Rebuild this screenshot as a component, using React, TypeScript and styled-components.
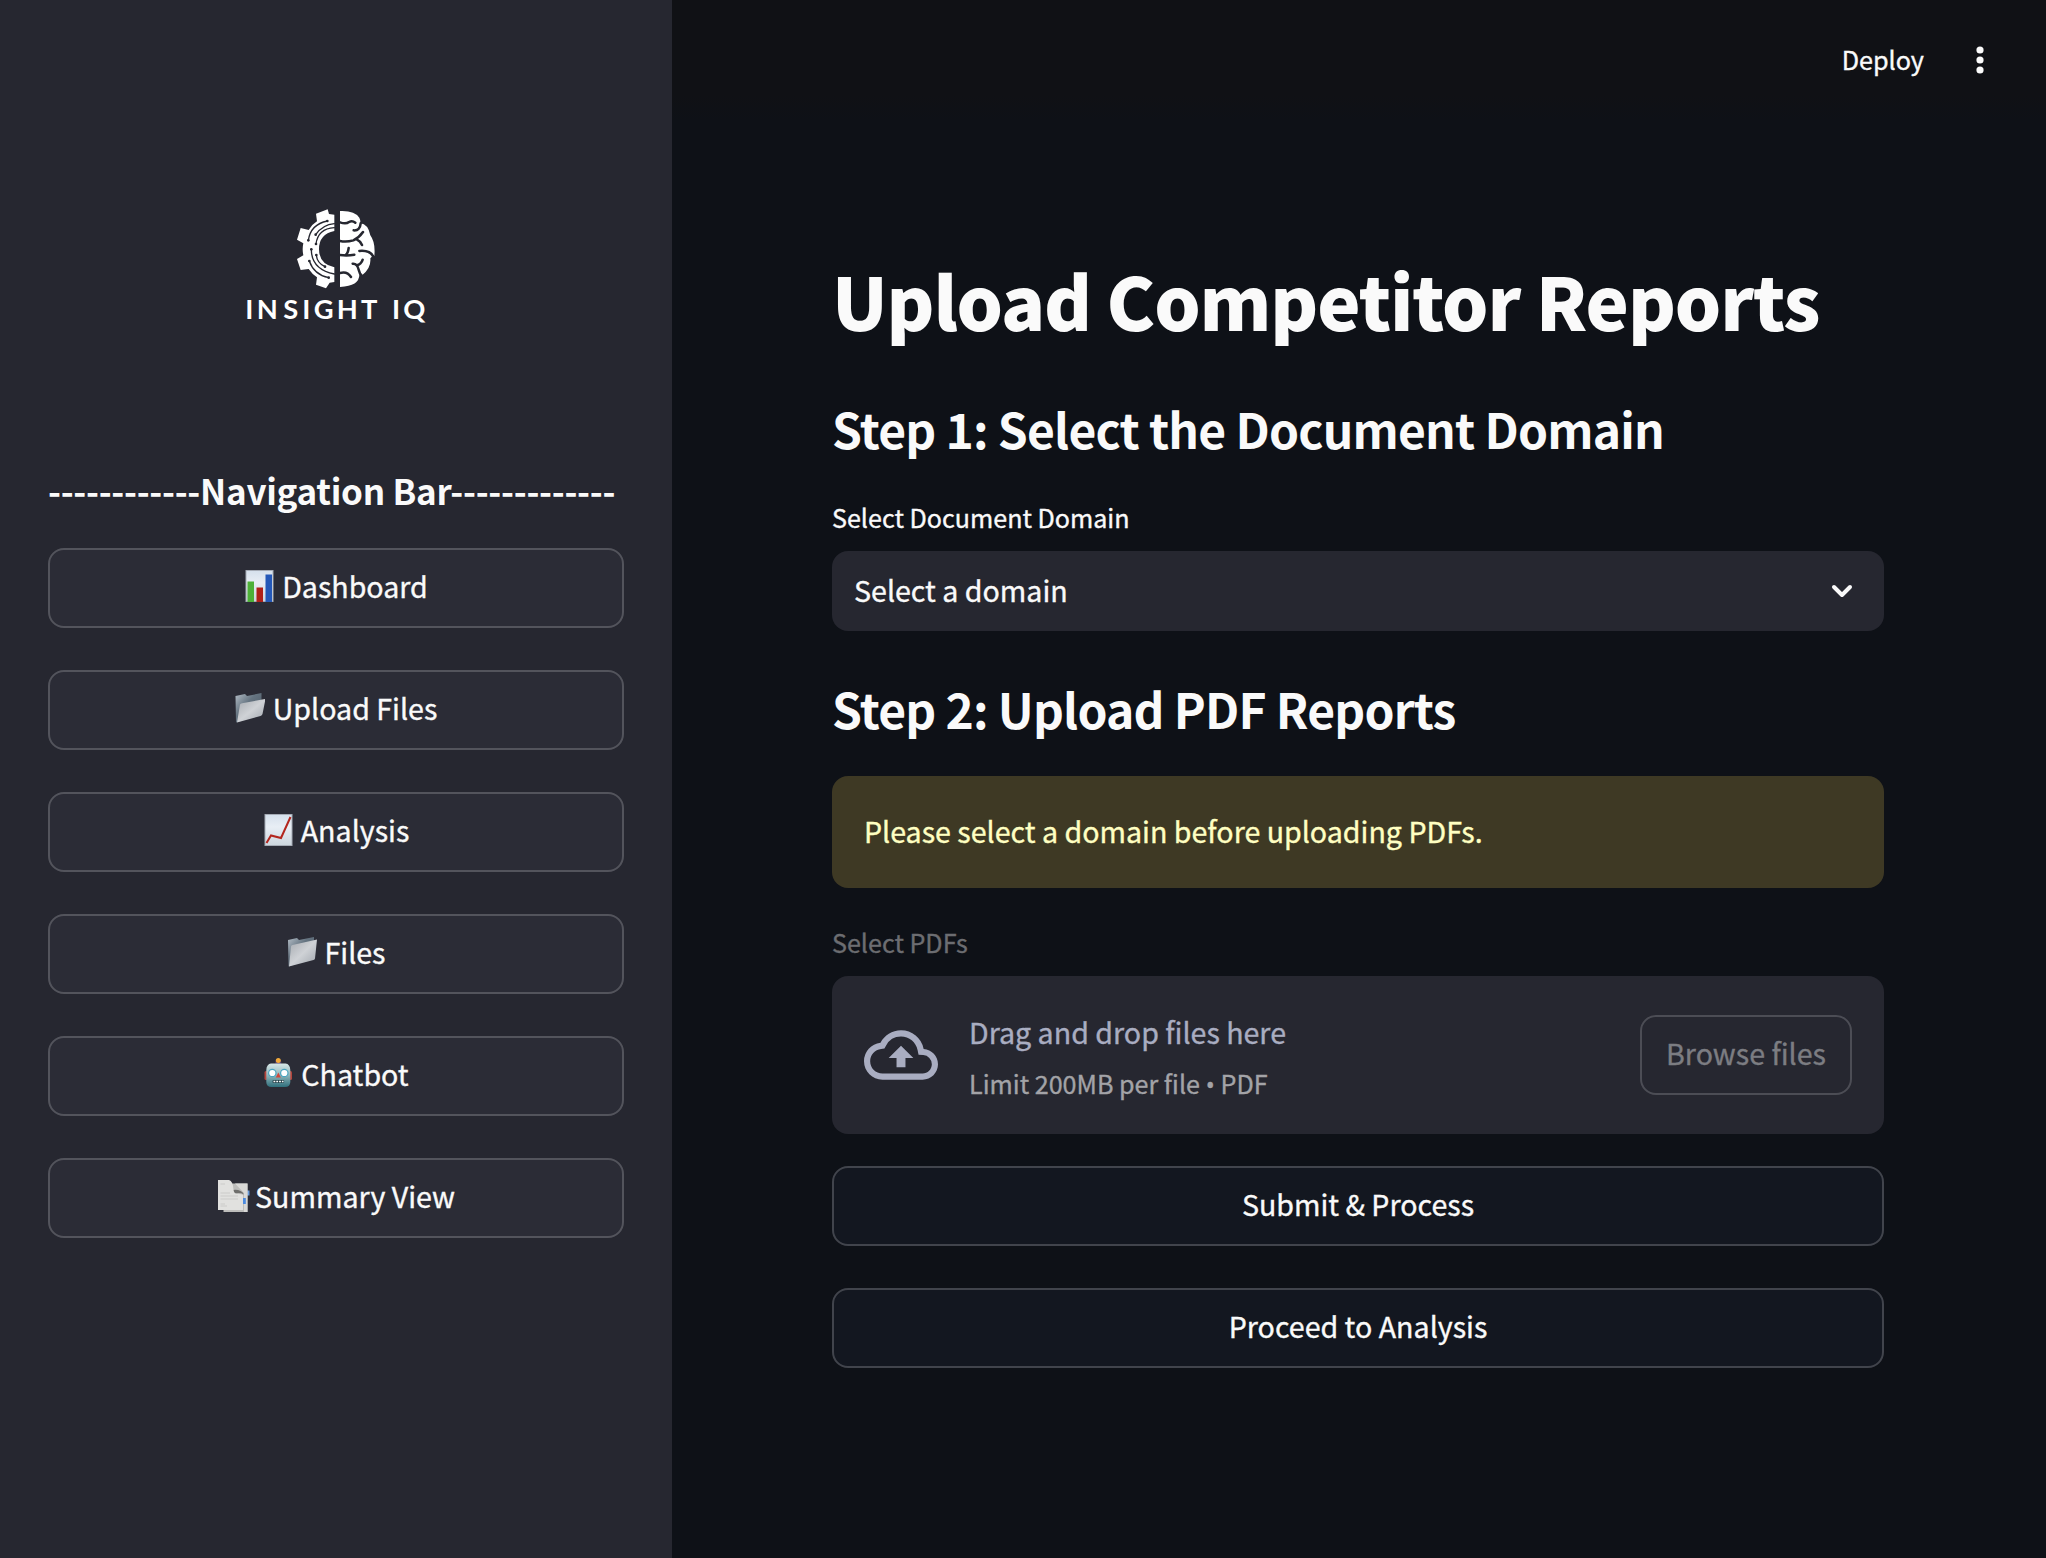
import React from "react";
import styled, { createGlobalStyle } from "styled-components";
import { MdOutlineCloudUpload } from "react-icons/md";

const Global = createGlobalStyle`
  * { box-sizing: border-box; }
  body { margin: 0; background: #0e1117; font-family: "Noto Sans CJK SC", "Noto Sans", sans-serif; color: #fafafa; -webkit-text-stroke: 0.35px; }
  button { font-family: inherit; }
  h1, h2, h3 { -webkit-text-stroke: 0; }
`;

const Page = styled.div`
  display: flex;
  width: 2046px;
  height: 1558px;
  overflow: hidden;
`;

const Sidebar = styled.aside`
  width: 672px;
  flex: none;
  background: #262730;
  padding: 0 48px;
  display: flex;
  flex-direction: column;
`;

const LogoBox = styled.div`
  display: flex;
  justify-content: center;
  padding: 190px 2px 0 0;
  height: 462px;
`;

const NavTitle = styled.h3`
  margin: 0;
  height: 86px;
  line-height: 56px;
  font-size: 35px;
  letter-spacing: -0.28px;
  font-weight: 700;
  white-space: nowrap;
`;

const NavList = styled.nav`
  display: flex;
  flex-direction: column;
  gap: 42px;
`;

const Button = styled.button<{ $tone?: "side" | "main" | "muted" }>`
  height: 80px;
  width: ${(p) => (p.$tone === "muted" ? "212px" : "100%")};
  flex: none;
  display: flex;
  align-items: center;
  justify-content: center;
  gap: 8px;
  padding: 0;
  border-radius: 16px;
  border: 2px solid ${(p) => (p.$tone === "side" ? "#53545c" : p.$tone === "muted" ? "#4c4d55" : "#41444c")};
  background: ${(p) => (p.$tone === "side" ? "#2b2c36" : p.$tone === "muted" ? "transparent" : "#131720")};
  color: ${(p) => (p.$tone === "muted" ? "#7c7d82" : "#fafafa")};
  font-size: 28.6px;
  line-height: 40px;
  -webkit-text-stroke: 0.35px;
`;

const ButtonText = styled.span`
  padding-bottom: 4px;
`;

const Main = styled.main`
  flex: 1;
  display: flex;
  flex-direction: column;
`;

const Header = styled.header`
  height: 120px;
  display: flex;
  justify-content: flex-end;
  align-items: center;
  gap: 52px;
  padding-right: 62px;
  background: linear-gradient(#101115 0 80%, #0e1117);
  font-size: 25.2px;
`;

const HeaderLink = styled.span`
  padding-bottom: 2px;
`;

const Content = styled.section`
  width: 1052px;
  margin-left: 160px;
  display: flex;
  flex-direction: column;
`;

const Title = styled.h1`
  margin: 126px 0 0;
  height: 106px;
  line-height: 106px;
  font-size: 73px;
  letter-spacing: -1.13px;
  font-weight: 900;
  white-space: nowrap;
`;

const StepTitle = styled.h2<{ $top: number }>`
  margin: ${(p) => p.$top}px 0 0;
  height: 64px;
  line-height: 64px;
  font-size: 48px;
  letter-spacing: -0.8px;
  font-weight: 700;
  white-space: nowrap;
`;

const Label = styled.label<{ $top: number; $dim?: boolean }>`
  margin-top: ${(p) => p.$top}px;
  height: 40px;
  line-height: 40px;
  font-size: 25.1px;
  color: ${(p) => (p.$dim ? "#6c6d71" : "#fafafa")};
`;

const Select = styled.div`
  margin-top: 14px;
  height: 80px;
  border-radius: 16px;
  background: #262730;
  display: flex;
  align-items: center;
  justify-content: space-between;
  padding: 0 30px 0 22px;
  font-size: 28.6px;
`;

const Alert = styled.div`
  margin-top: 36px;
  height: 112px;
  border-radius: 16px;
  background: #3e3924;
  color: #ffffc2;
  padding: 0 32px 3px;
  display: flex;
  align-items: center;
  font-size: 28.6px;
`;

const Dropzone = styled.div`
  margin-top: 14px;
  height: 158px;
  border-radius: 16px;
  background: #262730;
  display: flex;
  align-items: center;
  padding: 0 32px;
  color: #a9adc1;
`;

const DropText = styled.div`
  margin-left: 31px;
  padding-top: 3px;
  flex: 1;
  display: flex;
  flex-direction: column;
  gap: 9px;
`;

const DropMain = styled.span`
  font-size: 28.6px;
  line-height: 44px;
`;

const DropHint = styled.span`
  font-size: 25.1px;
  line-height: 40px;
  color: #a3a3a7;
`;

const Bullet = styled.span`
  font-family: "Open Sans", sans-serif;
  line-height: 1;
`;

const Actions = styled.div`
  margin-top: 32px;
  display: flex;
  flex-direction: column;
  gap: 42px;
`;

const Logo = () => (
  <svg width="210" height="150" viewBox="0 0 630 450">
    <path fill="#fff" d="M313 74 L297 72 L293 58 L258 71 L261 94 Q246 103 236 120 L212 114 L201 149 L220 160 Q216 178 220 196 L201 207 L212 240 L236 237 Q246 252 261 262 L258 284 L288 295 L299 278 L313 276 V232 Q267 222 267 177 Q267 133 313 123 Z" />
    <g fill="none" stroke="#262730" strokeWidth="4" strokeLinecap="round">
      <path d="M235 151 Q242 103 292 93 M257 134 Q278 104 313 101 M258 162 Q264 116 313 113 M244 178 Q244 238 313 252 M238 213 Q252 254 296 263 M259 195 Q261 219 285 230" />
    </g>
    <g fill="#262730"><circle cx="235" cy="151" r="4" /><circle cx="292" cy="93" r="4" /><circle cx="257" cy="134" r="4" /><circle cx="258" cy="162" r="4" /><circle cx="244" cy="178" r="4" /><circle cx="238" cy="213" r="4" /><circle cx="296" cy="263" r="4" /><circle cx="259" cy="195" r="4" /><circle cx="285" cy="230" r="4" /></g>
    <path fill="#fff" d="M330 63 Q374 61 388 83 Q392 91 391 100 Q414 102 421 136 Q437 158 433 198 Q424 199 421 205 Q424 233 397 255 Q394 248 388 250 Q391 288 330 291 Z" />
    <g fill="none" stroke="#262730" strokeWidth="7.5" strokeLinecap="round" strokeLinejoin="round">
      <path d="M330 97 Q348 103 357 96 Q367 91 376 98 M371 121 Q390 123 392 100 M330 153 Q349 157 370 151 Q387 143 399 126 M380 148 Q391 153 396 165 M330 195 Q352 198 373 194 M356 174 Q354 190 347 195 M388 183 Q420 180 430 200 M368 221 Q382 220 386 239 Q388 250 397 259 M380 226 Q394 223 398 209 M330 249 Q352 243 363 261" />
    </g>
    <text y="387" fill="#fff" stroke="none" fontFamily="Lato, sans-serif" fontWeight="700" fontSize="82" x="46 80 160 217 251 320 393 486 520">INSIGHTIQ</text>
  </svg>
);

const EmojiSvg = styled.svg`
  width: 30px;
  height: 36px;
  flex: none;
`;

const ChartBar = () => (
  <EmojiSvg viewBox="0 0 30 36">
    <defs>
      <linearGradient id="sheet" x1="0" y1="0" x2="0" y2="1"><stop offset="0" stopColor="#d5e0ec" /><stop offset=".4" stopColor="#e8eef5" /><stop offset="1" stopColor="#cdd6de" /></linearGradient>
    </defs>
    <rect x="2" y=".5" width="27" height="31" fill="url(#sheet)" stroke="#a5abb5" />
    <rect x="3.5" y="11.5" width="6.5" height="20.5" fill="#4db038" />
    <rect x="12.5" y="17.5" width="6.5" height="14.5" fill="#b02018" />
    <rect x="21.5" y="4.5" width="6.5" height="27.5" fill="#2458b8" />
  </EmojiSvg>
);
const OpenFolder = () => (
  <EmojiSvg viewBox="0 0 30 36">
    <defs>
      <linearGradient id="back" x1="0" y1="0" x2="1" y2="1"><stop offset="0" stopColor="#b4bec7" /><stop offset=".4" stopColor="#657481" /><stop offset="1" stopColor="#46525e" /></linearGradient>
      <linearGradient id="front" x1="0" y1="0" x2="1" y2="1"><stop offset="0" stopColor="#a5a9af" /><stop offset=".5" stopColor="#cfd2d6" /><stop offset="1" stopColor="#9fa5ad" /></linearGradient>
    </defs>
    <path d="M0.5 4 L10 2 L12 4 L26.5 1 V10 L6 29 L1 30.5 Z" fill="url(#back)" />
    <path d="M5 12.5 Q5.5 11.5 7 11.3 L30.5 7 L27.5 22 Q27 23.5 25.5 24 L2 30.5 Z" fill="url(#front)" />
  </EmojiSvg>
);
const ChartLine = () => (
  <EmojiSvg viewBox="0 0 30 36">
    <rect x="2" y=".5" width="27" height="31" fill="url(#sheet)" stroke="#a5abb5" />
    <path d="M3.5 29 L8 21.5 L18 24 L27.5 3" fill="none" stroke="#b3261e" strokeWidth="2" />
  </EmojiSvg>
);
const Folder = () => (
  <EmojiSvg viewBox="0 0 30 36">
    <path d="M1 4 L10 2 L12 4 L27 1 V10 L6 29 L1.5 30.5 Z" fill="url(#back)" />
    <path d="M4 10.5 Q4.2 9.3 5.5 9 L30 3.5 L28 22.5 Q27.8 23.7 26.5 24 L2 30.5 Z" fill="url(#front)" />
  </EmojiSvg>
);
const Robot = () => (
  <EmojiSvg viewBox="0 0 30 36">
    <defs>
      <linearGradient id="face" x1="0" y1="0" x2="0" y2="1"><stop offset="0" stopColor="#d8e8e8" /><stop offset=".5" stopColor="#8fb5ba" /><stop offset="1" stopColor="#2f6f7c" /></linearGradient>
    </defs>
    <rect x="1.5" y="13" width="27.5" height="9" rx="1.5" fill="#b5453c" />
    <circle cx="15.3" cy="4.2" r="3" fill="#4d3a70" />
    <circle cx="15.3" cy="2.6" r="2.5" fill="#f2a93a" />
    <path d="M8 5.5 H22.500 Q27 6 27.300 12 V24 Q27.200 29 22 29 H8.500 Q3.400 29 3.300 24 V12 Q3.600 6 8 5.500 Z" fill="url(#face)" />
    <circle cx="9.3" cy="15" r="3.7" fill="#fff" stroke="#4aa5c0" strokeWidth="1.2" />
    <circle cx="21.3" cy="15" r="3.700" fill="#fff" stroke="#4aa5c0" strokeWidth="1.2" />
    <path d="M15.3 14.500 L17.800 19.500 H12.800 Z" fill="#d2463a" />
    <rect x="9.500" y="22" width="11.600" height="3" rx="1" fill="#24454d" />
    <path d="M10.500 23.500 H20.500" stroke="#fff" strokeWidth="1.600" strokeDasharray="1.800 1" />
  </EmojiSvg>
);
const Pages = () => (
  <EmojiSvg viewBox="0 0 30 36" overflow="visible">
    <rect x="29" y="10.5" width="3.500" height="5" fill="#6b9ddd" />
    <path d="M6.500 3.500 H30.500 V32 H6.500 Z" fill="#bdbdbb" />
    <path d="M18 3.500 H30.500 V32 H27 V13 Z" fill="#d9d9d7" />
    <rect x="26" y="18" width="2.800" height="6" fill="#4c8be0" />
    <path d="M16 10 Q24 9 27 14.500 Q22 12 17 14 Z" fill="#6e6e6c" />
    <path d="M1 0 H12 Q16 1 16.500 10 Q17 14 21 14 Q24 13.500 26 15 V30 H1 Z" fill="#e1e1df" />
    <path d="M3.500 4 H8 M3.500 13 H13 M3.500 16 H21 M3.500 19 H21 M3.500 24 H8 M3.500 26 H10" stroke="#cbcbc9" strokeWidth="1" />
  </EmojiSvg>
);

const items: { icon: React.ReactNode; text: string }[] = [
  { icon: <ChartBar />, text: "Dashboard" },
  { icon: <OpenFolder />, text: "Upload Files" },
  { icon: <ChartLine />, text: "Analysis" },
  { icon: <Folder />, text: "Files" },
  { icon: <Robot />, text: "Chatbot" },
  { icon: <Pages />, text: "Summary View" },
];

export default function App() {
  return (
    <Page>
      <Global />
      <Sidebar>
        <LogoBox><Logo /></LogoBox>
        <NavTitle>------------Navigation Bar-------------</NavTitle>
        <NavList>
          {items.map((i) => (
            <Button key={i.text} $tone="side">{i.icon}<ButtonText>{i.text}</ButtonText></Button>
          ))}
        </NavList>
      </Sidebar>
      <Main>
        <Header>
          <HeaderLink>Deploy</HeaderLink>
          <svg width="8" height="28" viewBox="0 0 8 28" fill="#fafafa"><circle cx="4" cy="4" r="3.6" /><circle cx="4" cy="14" r="3.6" /><circle cx="4" cy="24" r="3.6" /></svg>
        </Header>
        <Content>
          <Title>Upload Competitor Reports</Title>
          <StepTitle $top={44}>Step 1: Select the Document Domain</StepTitle>
          <Label $top={37}>Select Document Domain</Label>
          <Select>
            <ButtonText>Select a domain</ButtonText>
            <svg width="24" height="16" viewBox="0 0 24 16" fill="none" stroke="#fafafa" strokeWidth="4" strokeLinecap="round" strokeLinejoin="round"><path d="M4 4l8 8 8-8" /></svg>
          </Select>
          <StepTitle $top={45}>Step 2: Upload PDF Reports</StepTitle>
          <Alert>Please select a domain before uploading PDFs.</Alert>
          <Label $top={34} $dim>Select PDFs</Label>
          <Dropzone>
            <MdOutlineCloudUpload size={74} stroke="none" />
            <DropText>
              <DropMain>Drag and drop files here</DropMain>
              <DropHint>Limit 200MB per file <Bullet>•</Bullet> PDF</DropHint>
            </DropText>
            <Button $tone="muted"><ButtonText>Browse files</ButtonText></Button>
          </Dropzone>
          <Actions>
            <Button><ButtonText>Submit &amp; Process</ButtonText></Button>
            <Button><ButtonText>Proceed to Analysis</ButtonText></Button>
          </Actions>
        </Content>
      </Main>
    </Page>
  );
}
